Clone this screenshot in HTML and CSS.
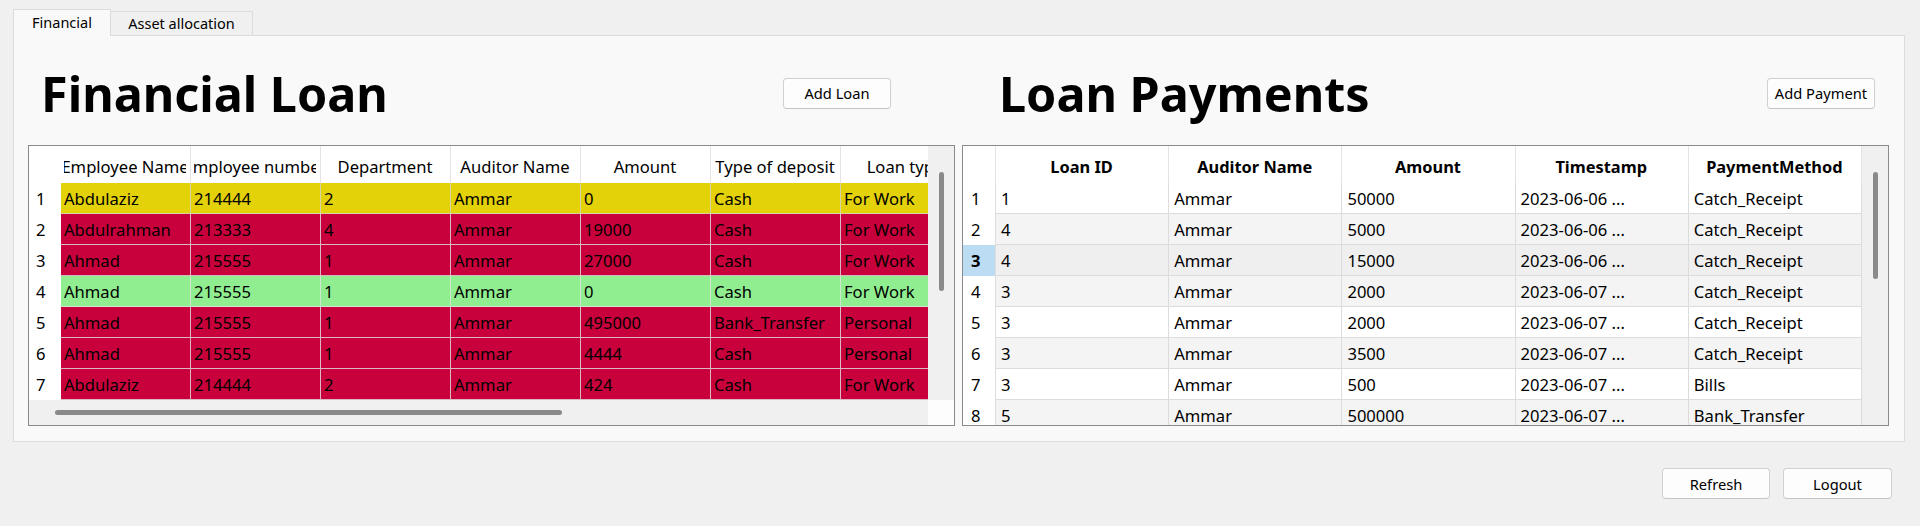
FILE: index.html
```html
<!DOCTYPE html>
<html>
<head>
<meta charset="utf-8">
<title>Financial</title>
<link rel="stylesheet" href="styles.css">
</head>
<body>
<div class="tabs">
  <div class="tab active">Financial</div>
  <div class="tab other">Asset allocation</div>
</div>
<div class="panel">
  <section class="pane">
    <div class="pane-head loans-head">
      <h1>Financial Loan</h1>
      <button class="btn">Add Loan</button>
    </div>
    <div class="tview with-h">
      <div class="viewport">
        <div class="grid loans-grid">
          <div class="hcell corner-h"></div>
          <div class="hcell"><div class="lbl"><span>Employee Name</span></div></div>
          <div class="hcell"><div class="lbl"><span>Employee number</span></div></div>
          <div class="hcell"><div class="lbl"><span>Department</span></div></div>
          <div class="hcell"><div class="lbl"><span>Auditor Name</span></div></div>
          <div class="hcell"><div class="lbl"><span>Amount</span></div></div>
          <div class="hcell"><div class="lbl"><span>Type of deposit</span></div></div>
          <div class="hcell"><div class="lbl"><span>Loan type</span></div></div>

          <div class="rh">1</div><div class="c y">Abdulaziz</div><div class="c y">214444</div><div class="c y">2</div><div class="c y">Ammar</div><div class="c y">0</div><div class="c y">Cash</div><div class="c y">For Work</div>
          <div class="rh">2</div><div class="c r">Abdulrahman</div><div class="c r">213333</div><div class="c r">4</div><div class="c r">Ammar</div><div class="c r">19000</div><div class="c r">Cash</div><div class="c r">For Work</div>
          <div class="rh">3</div><div class="c r">Ahmad</div><div class="c r">215555</div><div class="c r">1</div><div class="c r">Ammar</div><div class="c r">27000</div><div class="c r">Cash</div><div class="c r">For Work</div>
          <div class="rh">4</div><div class="c g">Ahmad</div><div class="c g">215555</div><div class="c g">1</div><div class="c g">Ammar</div><div class="c g">0</div><div class="c g">Cash</div><div class="c g">For Work</div>
          <div class="rh">5</div><div class="c r">Ahmad</div><div class="c r">215555</div><div class="c r">1</div><div class="c r">Ammar</div><div class="c r">495000</div><div class="c r">Bank_Transfer</div><div class="c r">Personal</div>
          <div class="rh">6</div><div class="c r">Ahmad</div><div class="c r">215555</div><div class="c r">1</div><div class="c r">Ammar</div><div class="c r">4444</div><div class="c r">Cash</div><div class="c r">Personal</div>
          <div class="rh">7</div><div class="c r">Abdulaziz</div><div class="c r">214444</div><div class="c r">2</div><div class="c r">Ammar</div><div class="c r">424</div><div class="c r">Cash</div><div class="c r">For Work</div>
        </div>
      </div>
      <div class="vscroll"><span class="vthumb loans-vthumb"></span></div>
      <div class="hscroll"><span class="hthumb"></span></div>
      <div class="sc-corner"></div>
    </div>
  </section>

  <section class="pane">
    <div class="pane-head pay-head">
      <h1>Loan Payments</h1>
      <button class="btn">Add Payment</button>
    </div>
    <div class="tview">
      <div class="viewport">
        <div class="grid pay-grid">
          <div class="hcell corner-h"></div>
          <div class="hcell b"><div class="lbl"><span>Loan ID</span></div></div>
          <div class="hcell b"><div class="lbl"><span>Auditor Name</span></div></div>
          <div class="hcell b"><div class="lbl"><span>Amount</span></div></div>
          <div class="hcell b"><div class="lbl"><span>Timestamp</span></div></div>
          <div class="hcell b"><div class="lbl"><span>PaymentMethod</span></div></div>

          <div class="rh">1</div><div class="c w">1</div><div class="c w">Ammar</div><div class="c w">50000</div><div class="c w">2023-06-06 ...</div><div class="c w">Catch_Receipt</div>
          <div class="rh">2</div><div class="c a">4</div><div class="c a">Ammar</div><div class="c a">5000</div><div class="c a">2023-06-06 ...</div><div class="c a">Catch_Receipt</div>
          <div class="rh sel">3</div><div class="c s">4</div><div class="c s">Ammar</div><div class="c s">15000</div><div class="c s">2023-06-06 ...</div><div class="c s">Catch_Receipt</div>
          <div class="rh">4</div><div class="c a">3</div><div class="c a">Ammar</div><div class="c a">2000</div><div class="c a">2023-06-07 ...</div><div class="c a">Catch_Receipt</div>
          <div class="rh">5</div><div class="c w">3</div><div class="c w">Ammar</div><div class="c w">2000</div><div class="c w">2023-06-07 ...</div><div class="c w">Catch_Receipt</div>
          <div class="rh">6</div><div class="c a">3</div><div class="c a">Ammar</div><div class="c a">3500</div><div class="c a">2023-06-07 ...</div><div class="c a">Catch_Receipt</div>
          <div class="rh">7</div><div class="c w">3</div><div class="c w">Ammar</div><div class="c w">500</div><div class="c w">2023-06-07 ...</div><div class="c w">Bills</div>
          <div class="rh">8</div><div class="c a">5</div><div class="c a">Ammar</div><div class="c a">500000</div><div class="c a">2023-06-07 ...</div><div class="c a">Bank_Transfer</div>
        </div>
      </div>
      <div class="vscroll"><span class="vthumb pay-vthumb"></span></div>
    </div>
  </section>
</div>
<div class="footer">
  <button class="btn">Refresh</button>
  <button class="btn">Logout</button>
</div>
</body>
</html>
```

FILE: styles.css
```css
* { box-sizing: border-box; }

html, body {
  margin: 0;
}

body {
  width: 1920px;
  height: 526px;
  overflow: hidden;
  background: #f0f0f0;
  color: #000;
  font-family: "Noto Sans", "DejaVu Sans", sans-serif;
  padding: 9px 15px 0 13px;
}

/* ---------- tabs ---------- */
.tabs {
  display: flex;
  align-items: flex-end;
  height: 26px;
}

.tab {
  display: flex;
  align-items: center;
  justify-content: center;
  font-size: 14.5px;
  border: 1px solid #dcdcdc;
  border-bottom: none;
  background: #f0f0f0;
  height: 24px;
  padding-bottom: 1px;
}

.tab.active {
  width: 98px;
  height: 27px;
  margin-bottom: -1px;
  background: #f9f9f9;
  position: relative;
  z-index: 1;
  padding-bottom: 3px;
}

.tab.other {
  width: 142px;
  border-left: none;
}

/* ---------- panel ---------- */
.panel {
  height: 407px;
  border: 1px solid #dcdcdc;
  background: #f9f9f9;
  padding: 0 15px 15px 14px;
  display: grid;
  grid-template-columns: 1fr 1fr;
  column-gap: 7px;
}

.pane {
  display: flex;
  flex-direction: column;
  min-width: 0;
}

.pane-head {
  height: 109px;
  display: flex;
  align-items: center;
  justify-content: space-between;
  padding-top: 5px;
}

.loans-head { padding-left: 13px; padding-right: 64px; }
.pay-head { padding-left: 37px; padding-right: 14px; }

.pane-head h1 {
  margin: 0;
  font-size: 48.5px;
  line-height: 48px;
  font-weight: 700;
  letter-spacing: 0;
}

.btn {
  width: 108px;
  height: 31px;
  font-family: "Noto Sans", "DejaVu Sans", sans-serif;
  font-size: 14.7px;
  color: #000;
  background: #fdfdfd;
  border: 1px solid #d0d0d0;
  border-bottom-color: #c4c4c4;
  border-radius: 4px;
  padding: 0;
}

/* ---------- table views ---------- */
.tview {
  height: 281px;
  border: 1px solid #8a8a8a;
  background: #fff;
  display: grid;
  grid-template-columns: minmax(0, 1fr) 26px;
  grid-template-rows: minmax(0, 1fr);
}

.tview.with-h {
  grid-template-rows: minmax(0, 1fr) 25px;
}

.viewport {
  overflow: hidden;
  min-width: 0;
  min-height: 0;
}

.grid {
  display: grid;
  grid-template-rows: 37px;
  grid-auto-rows: 31px;
  font-size: 16.6px;
}

.loans-grid {
  grid-template-columns: 32px repeat(7, 130px);
  width: max-content;
}

.pay-grid {
  grid-template-columns: 33px repeat(5, minmax(0, 1fr));
}

.hcell {
  background: #fff;
  border-right: 1px solid #e3e3e3;
  display: flex;
  align-items: center;
  padding: 3px 4px 0 3px;
  min-width: 0;
}

.lbl {
  width: 100%;
  display: flex;
  justify-content: center;
  overflow: hidden;
  white-space: nowrap;
}

.lbl span { flex: none; }

.hcell.b { font-weight: 700; font-size: 16.4px; }

.corner-h { border-right: none; }
.pay-grid .corner-h { border-right: 1px solid #e3e3e3; }

.rh {
  background: #fff;
  padding-left: 7px;
  line-height: 30px;
  padding-top: 1px;
}

.pay-grid .rh { padding-left: 8px; border-right: 1px solid #dedede; }
.rh.sel { background: #bcdcf4; font-weight: 700; }

.c {
  border-right: 1px solid #d6d6d6;
  border-bottom: 1px solid #d6d6d6;
  padding: 1px 3px 0 3px;
  line-height: 29px;
  white-space: nowrap;
  overflow: hidden;
}

.pay-grid .c { padding-left: 5px; border-color: #dcdcdc; }

.c.y { background: #e3d109; border-color: #d8d2a8; }
.c.r { background: #c8003b; border-color: #d9b9c3; }
.c.g { background: #90ee90; border-color: #cfe6cf; }
.c.w { background: #ffffff; }
.c.a { background: #f4f4f4; }
.c.s { background: #efefef; }

/* ---------- scrollbars ---------- */
.vscroll {
  background: #f0f0f0;
  padding: 26px 0 0 11px;
}

.vthumb {
  display: block;
  width: 5px;
  background: #8a8a8a;
  border-radius: 3px;
}

.loans-vthumb { height: 119px; }
.pay-vthumb { height: 107px; }

.hscroll {
  background: #f0f0f0;
  padding: 10px 0 0 26px;
}

.hthumb {
  display: block;
  width: 507px;
  height: 5px;
  background: #8a8a8a;
  border-radius: 3px;
}

.sc-corner { background: #fdfdfd; }

/* ---------- footer ---------- */
.footer {
  display: flex;
  justify-content: flex-end;
  gap: 13px;
  margin-top: 26px;
  padding-right: 13px;
}

.footer .btn { height: 31px; }
.footer .btn + .btn { width: 109px; }
```
